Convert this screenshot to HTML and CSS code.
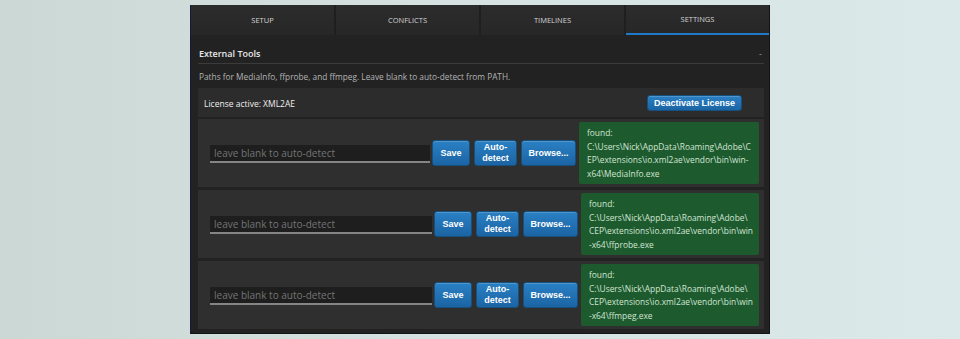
FILE: index.html
```html
<!DOCTYPE html>
<html lang="en">
<head>
  <meta charset="UTF-8">
  <title>XML2AE Settings</title>
  <link rel="stylesheet" href="styles.css">
</head>
<body>
  <div class="panel">
    <div class="tabs">
      <div class="tab">SETUP</div>
      <div class="tab">CONFLICTS</div>
      <div class="tab">TIMELINES</div>
      <div class="tab active">SETTINGS</div>
    </div>
    <div class="section">
      <div class="section-head">
        <span>External Tools</span>
        <span class="collapse">-</span>
      </div>
      <div class="hint">Paths for MediaInfo, ffprobe, and ffmpeg. Leave blank to auto-detect from PATH.</div>
      <div class="license">
        <span>License active: XML2AE</span>
        <button class="btn btn-wide">Deactivate License</button>
      </div>

      <div class="tool-row">
        <input class="path-input" type="text" placeholder="leave blank to auto-detect">
        <button class="btn btn-save">Save</button>
        <button class="btn btn-auto">Auto-<br>detect</button>
        <button class="btn btn-browse">Browse...</button>
        <div class="found wide">found:<br>C:\Users\Nick\AppData\Roaming\Adobe\C<br>EP\extensions\io.xml2ae\vendor\bin\win-<br>x64\MediaInfo.exe</div>
      </div>

      <div class="tool-row">
        <input class="path-input" type="text" placeholder="leave blank to auto-detect">
        <button class="btn btn-save">Save</button>
        <button class="btn btn-auto">Auto-<br>detect</button>
        <button class="btn btn-browse">Browse...</button>
        <div class="found">found:<br>C:\Users\Nick\AppData\Roaming\Adobe\<br>CEP\extensions\io.xml2ae\vendor\bin\win<br>-x64\ffprobe.exe</div>
      </div>

      <div class="tool-row">
        <input class="path-input" type="text" placeholder="leave blank to auto-detect">
        <button class="btn btn-save">Save</button>
        <button class="btn btn-auto">Auto-<br>detect</button>
        <button class="btn btn-browse">Browse...</button>
        <div class="found">found:<br>C:\Users\Nick\AppData\Roaming\Adobe\<br>CEP\extensions\io.xml2ae\vendor\bin\win<br>-x64\ffmpeg.exe</div>
      </div>
    </div>
  </div>
</body>
</html>
```

FILE: styles.css
```css
body {
  margin: 0;
  height: 339px;
  overflow: hidden;
  background: linear-gradient(to right, #ccd8d5, #d6e3e2 50%, #dbe9ea);
  font-family: "Open Sans", "Liberation Sans", sans-serif;
}
.panel {
  margin: 5px 0 0 190px;
  width: 578px;
  height: 328px;
  background: #222;
  border-left: 1px solid #16193c;
  border-right: 1px solid #141414;
  border-bottom: 1px solid #141414;
  overflow: hidden;
}
.tabs {
  display: flex;
  height: 30px;
  background: #2a2a2a;
}
.tab {
  flex: 1;
  display: flex;
  align-items: center;
  justify-content: center;
  font-size: 7.5px;
  color: #d4d4d4;
  border-right: 2px solid #1f1f1f;
  background: linear-gradient(#2c2c2c, #272727);
}
.tab:last-child { border-right: 0; }
.tab.active {
  border-bottom: 2px solid #1f78c8;
}
.section {
  padding: 0 5px 0 7px;
}
.section-head {
  display: flex;
  justify-content: space-between;
  align-items: center;
  line-height: 13px;
  padding: 12px 2px 3px 1px;
  border-bottom: 1px solid #3b3b3b;
  font-size: 9px;
  font-weight: 600;
  color: #e8e8e8;
}
.collapse { color: #999; font-weight: 400; }
.hint {
  height: 24px;
  line-height: 26px;
  padding-left: 1px;
  font-size: 8.3px;
  color: #b4b4b4;
}
.license {
  display: flex;
  justify-content: space-between;
  align-items: center;
  height: 29px;
  padding: 1px 22px 0 6px;
  box-sizing: border-box;
  background: #2c2c2c;
  font-size: 8.5px;
  color: #eee;
}
.tool-row {
  display: flex;
  align-items: center;
  height: 68px;
  margin-top: 3px;
  padding: 0 5px 0 12px;
  background: #2f2f2f;
}
.license + .tool-row { margin-top: 2px; }
.path-input {
  flex: 1;
  min-width: 0;
  height: 16px;
  margin: 1px 2px 0 0;
  padding: 0 4px;
  background: #1e1e1e;
  border: 0;
  border-bottom: 2px solid #858585;
  color: #ccc;
  font-family: "Open Sans", sans-serif;
  font-size: 10px;
}
.path-input::placeholder { color: #747474; }
.btn {
  font-family: "Liberation Sans", sans-serif;
  font-weight: bold;
  font-size: 9px;
  line-height: 11px;
  color: #fff;
  background: linear-gradient(#2a80c4, #1b64a4);
  border: 1px solid #15507f;
  border-radius: 3px;
  box-shadow: inset 0 1px 0 rgba(255,255,255,0.18);
  padding: 0;
  height: 26px;
}
.btn-wide { width: 95px; height: 16px; }
.btn-save { width: 38px; }
.btn-auto { width: 43px; margin-left: 4px; }
.btn-browse { width: 55px; margin-left: 4px; }
.found {
  width: 170px;
  margin-left: 3px;
  padding: 4px 0 4px 8px;
  height: 54px;
  background: #1d5b2f;
  border-radius: 2px;
  font-size: 8.4px;
  line-height: 13.5px;
  color: #d3e4d3;
  white-space: nowrap;
}
.found.wide { width: 172px; }
```
